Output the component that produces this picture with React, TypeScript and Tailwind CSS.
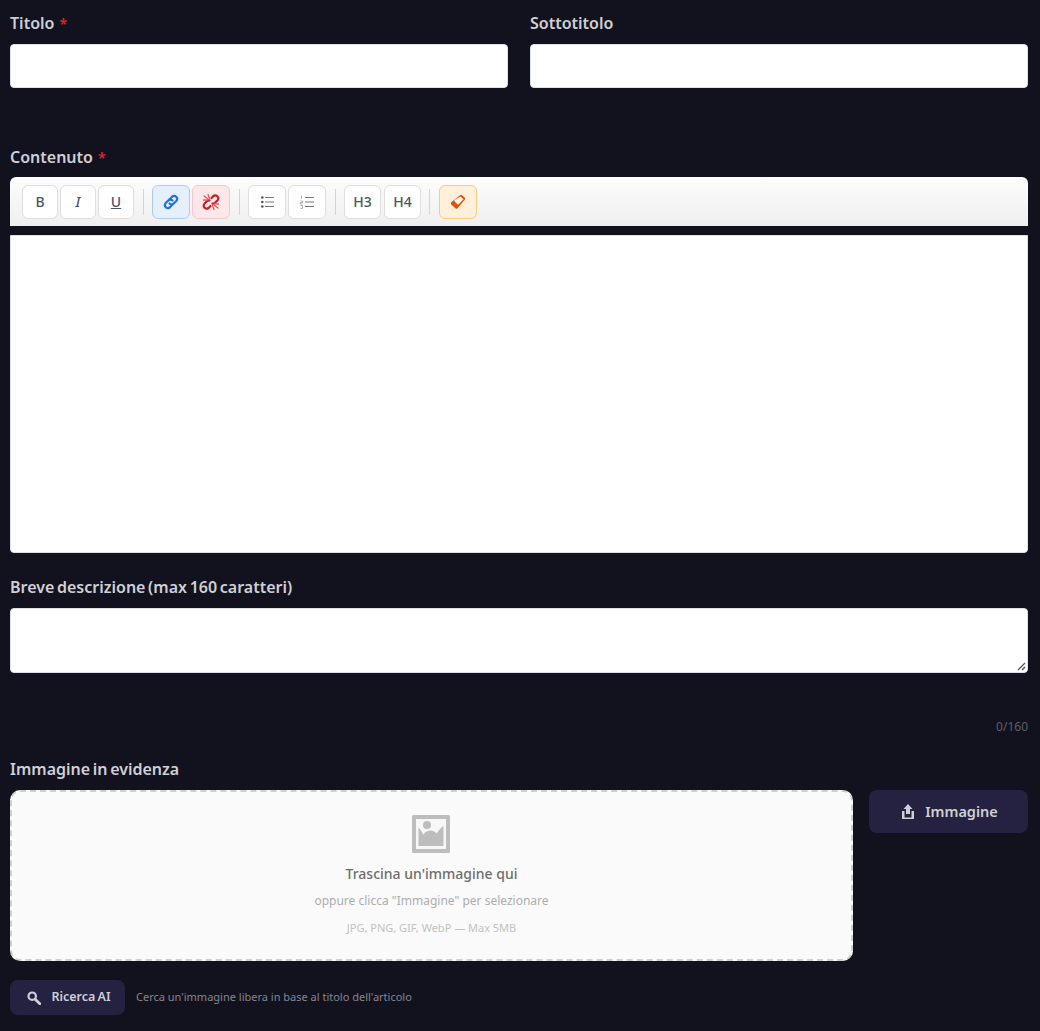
import React from 'react';
import { twMerge } from 'tailwind-merge';

const Label = ({ text, required }: { text: string; required?: boolean }) => (
  <label className="block text-[16px] leading-[22px] font-semibold [word-spacing:-1.5px] text-[#cfcfd6]">
    {text}
    {required && <span className="ml-[5px] text-[14px] leading-none text-[#dc2638]">*</span>}
  </label>
);

const Sep = ({ className }: { className?: string }) => (
  <div className={twMerge('ml-[9px] mr-[8px] h-[26px] w-px bg-[#d4d4d4]', className)} />
);

const ToolButton = ({
  className,
  children,
}: {
  className?: string;
  children: React.ReactNode;
}) => (
  <button
    className={twMerge(
      'flex h-[34px] items-center justify-center rounded-[6px] border border-[#dedede] bg-white text-[14px] font-medium text-[#4b5563]',
      className,
    )}
  >
    {children}
  </button>
);

const LinkIcon = () => (
  <svg width="18" height="18" viewBox="0 0 18 18" fill="none" stroke="#1f74e8" strokeWidth="2.2" strokeLinecap="round">
    <path d="M7.6 6.2 10.3 3.5a3 3 0 0 1 4.2 4.2l-2.8 2.8a3 3 0 0 1-4.2 0" />
    <path d="M10.4 11.8 7.7 14.5a3 3 0 0 1-4.2-4.2l2.8-2.8a3 3 0 0 1 4.2 0" />
  </svg>
);

const UnlinkIcon = () => (
  <svg width="18" height="18" viewBox="0 0 18 18" fill="none" stroke="#c81e24" strokeWidth="2.2" strokeLinecap="round">
    <path d="M9.500 5 11.400 3a3 3 0 0 1 4.200 4.200l-2.600 2.600a3 3 0 0 1-2.500.8" />
    <path d="M8.500 13 6.600 15a3 3 0 0 1-4.200-4.200l2.600-2.600a3 3 0 0 1 2.500-.8" />
    <path d="M2 3l4 3M6 1.500l1.500 4M1.500 7l4 .2M16 15l-4-3M12 16.500l-1.500-4M16.500 11l-4-.2" strokeWidth="1.300" stroke="#d95a5f" />
  </svg>
);

const BulletIcon = () => (
  <svg width="13" height="14" viewBox="0 0 13 14">
    <g fill="#555">
      <circle cx="1.300" cy="2.500" r="1.300" />
      <circle cx="1.300" cy="7" r="1.300" />
      <circle cx="1.300" cy="11.500" r="1.300" />
    </g>
    <path d="M4 2.500h9M4 7h9M4 11.500h9" stroke="#777" strokeWidth="1" />
  </svg>
);

const NumberedIcon = () => (
  <svg width="14" height="14" viewBox="0 0 14 14">
    <path d="M1.500.5v3.500M.5 6h2v1.500h-2V9h2M.5 10.500h2v3h-2" fill="none" stroke="#999" strokeWidth="0.8" />
    <path d="M5 2.500h9M5 7h9M5 11.500h9" stroke="#777" strokeWidth="1" />
  </svg>
);

const EraserIcon = () => (
  <svg width="16" height="16" viewBox="0 0 16 16">
    <path d="M10 1.200a1.500 1.500 0 0 1 2.100 0l2.700 2.500a1.500 1.500 0 0 1 0 2.100L7.500 14.200a1.500 1.500 0 0 1-2.100 0L1.200 10.400a1.500 1.500 0 0 1 0-2.100z" fill="#e2500f" />
    <path d="M10.500 2.500l3 2.700-4.800 5-1 .2-3.400-3.300.2-1z" fill="#fff8ee" />
  </svg>
);

const PictureIcon = () => (
  <svg width="38" height="38" viewBox="0 0 38 38" className="mr-px">
    <rect width="38" height="38" rx="1.500" fill="#bdbdbd" />
    <rect x="4" y="4" width="30" height="30" fill="#f7f7f7" />
    <circle cx="15" cy="10" r="4" fill="#bdbdbd" />
    <path d="M6.500 12.500c2.500 2.500 4 5.500 5 7 2-3 4.500-4 7-4 3 0 5 1.500 6 3 2-2.500 4-6 7-7.500v20h-25z" fill="#bdbdbd" />
  </svg>
);

const UploadIcon = () => (
  <svg width="12" height="15" viewBox="0 0 12 15" fill="#cfcfd6">
    <path d="M6 0 10.500 5H8v5H4V5H1.500z" />
    <path d="M0 7h2.500v6.500h7V7H12v8H0z" />
  </svg>
);

const SearchIcon = () => (
  <svg width="14" height="14" viewBox="0 0 14 14" fill="none" stroke="#cfcfd6">
    <circle cx="5.200" cy="5.200" r="3.700" strokeWidth="2.200" />
    <path d="M8.200 8.200 12.800 12.800" strokeWidth="2.800" strokeLinecap="round" />
  </svg>
);

export default function App() {
  return (
    <div
      className="min-h-[1031px] bg-[#12121e] pl-[10px] pr-[12px] pt-[12px] text-[#cfcfd6]"
      style={{ fontFamily: '"Noto Sans", sans-serif' }}
    >
      <div className="grid grid-cols-2 gap-[22px]">
        <div>
          <Label text="Titolo" required />
          <input className="mt-[10px] block h-[44px] w-full rounded-[4px] border border-[#dee2e6] bg-white" />
        </div>
        <div>
          <Label text="Sottotitolo" />
          <input className="mt-[10px] block h-[44px] w-full rounded-[4px] border border-[#dee2e6] bg-white" />
        </div>
      </div>

      <div className="mt-[58px]">
        <Label text="Contenuto" required />
        <div className="mt-[9px] flex h-[49px] items-center rounded-t-[6px] bg-gradient-to-b from-[#fdfdfd] to-[#efefef] pl-[12px]">
          <div className="flex gap-[2px]">
            <ToolButton className="w-[36px]">B</ToolButton>
            <ToolButton className="w-[36px] italic">I</ToolButton>
            <ToolButton className="w-[36px] underline">U</ToolButton>
          </div>
          <Sep />
          <div className="flex gap-[2px]">
            <ToolButton className="w-[38px] border-[#a8cbfb] bg-[#e6effd]">
              <LinkIcon />
            </ToolButton>
            <ToolButton className="w-[38px] border-[#f8c9cc] bg-[#fde7e8]">
              <UnlinkIcon />
            </ToolButton>
          </div>
          <Sep />
          <div className="flex gap-[2px]">
            <ToolButton className="w-[38px]">
              <BulletIcon />
            </ToolButton>
            <ToolButton className="w-[38px]">
              <NumberedIcon />
            </ToolButton>
          </div>
          <Sep />
          <div className="flex gap-[3px]">
            <ToolButton className="w-[37px]">H3</ToolButton>
            <ToolButton className="w-[37px]">H4</ToolButton>
          </div>
          <Sep className="ml-[8px] mr-[9px]" />
          <ToolButton className="w-[38px] border-[#fdc97a] bg-[#fff0dc]">
            <EraserIcon />
          </ToolButton>
        </div>
        <div className="mt-[9px] h-[318px] rounded-b-[4px] border border-[#dee2e6] bg-white" />
      </div>

      <div className="mt-[23px]">
        <Label text="Breve descrizione (max 160 caratteri)" />
        <div className="relative mt-[10px]">
          <textarea className="block h-[65px] w-full resize-none rounded-[4px] border border-[#dee2e6] bg-white" />
          <svg width="9" height="9" viewBox="0 0 9 9" className="absolute bottom-[2px] right-[2px]" stroke="#555" fill="none">
            <path d="M1 8 8 1" strokeWidth="1.200" />
            <path d="M5 8 8 5" strokeWidth="1.600" />
          </svg>
        </div>
        <div className="mt-[46px] text-right text-[12px] leading-[16px] text-[#5e5f68]">0/160</div>
      </div>

      <div className="mt-[23px]">
        <Label text="Immagine in evidenza" />
        <div className="mt-[10px] flex items-start gap-[16px]">
          <div className="flex h-[171px] w-[843px] flex-col items-center rounded-[10px] border-2 border-dashed border-[#cfcfcf] bg-[#fafafa] pt-[23px]">
            <PictureIcon />
            <div className="mt-[11px] text-[14px] leading-[20px] font-medium text-[#6e6e6e]">Trascina un'immagine qui</div>
            <div className="mt-[8px] text-[12px] leading-[18px] text-[#adadad]">oppure clicca "Immagine" per selezionare</div>
            <div className="mt-[10px] text-[11px] leading-[16px] text-[#c2c2c2]">JPG, PNG, GIF, WebP — Max 5MB</div>
          </div>
          <button className="flex h-[43px] flex-1 items-center justify-center gap-[11px] rounded-[8px] bg-[#242240] pl-[3px] text-[14.500px] font-semibold text-[#cfcfd6]">
            <UploadIcon />
            Immagine
          </button>
        </div>
      </div>

      <div className="mt-[19px] flex items-center gap-[11px]">
        <button className="flex h-[35px] w-[115px] items-center justify-center gap-[10px] rounded-[8px] bg-[#242240] pl-[3px] text-[12.500px] font-semibold [word-spacing:-1px] text-[#cfcfd6]">
          <SearchIcon />
          Ricerca AI
        </button>
        <span className="text-[11px] text-[#858590]">Cerca un'immagine libera in base al titolo dell'articolo</span>
      </div>
    </div>
  );
}
